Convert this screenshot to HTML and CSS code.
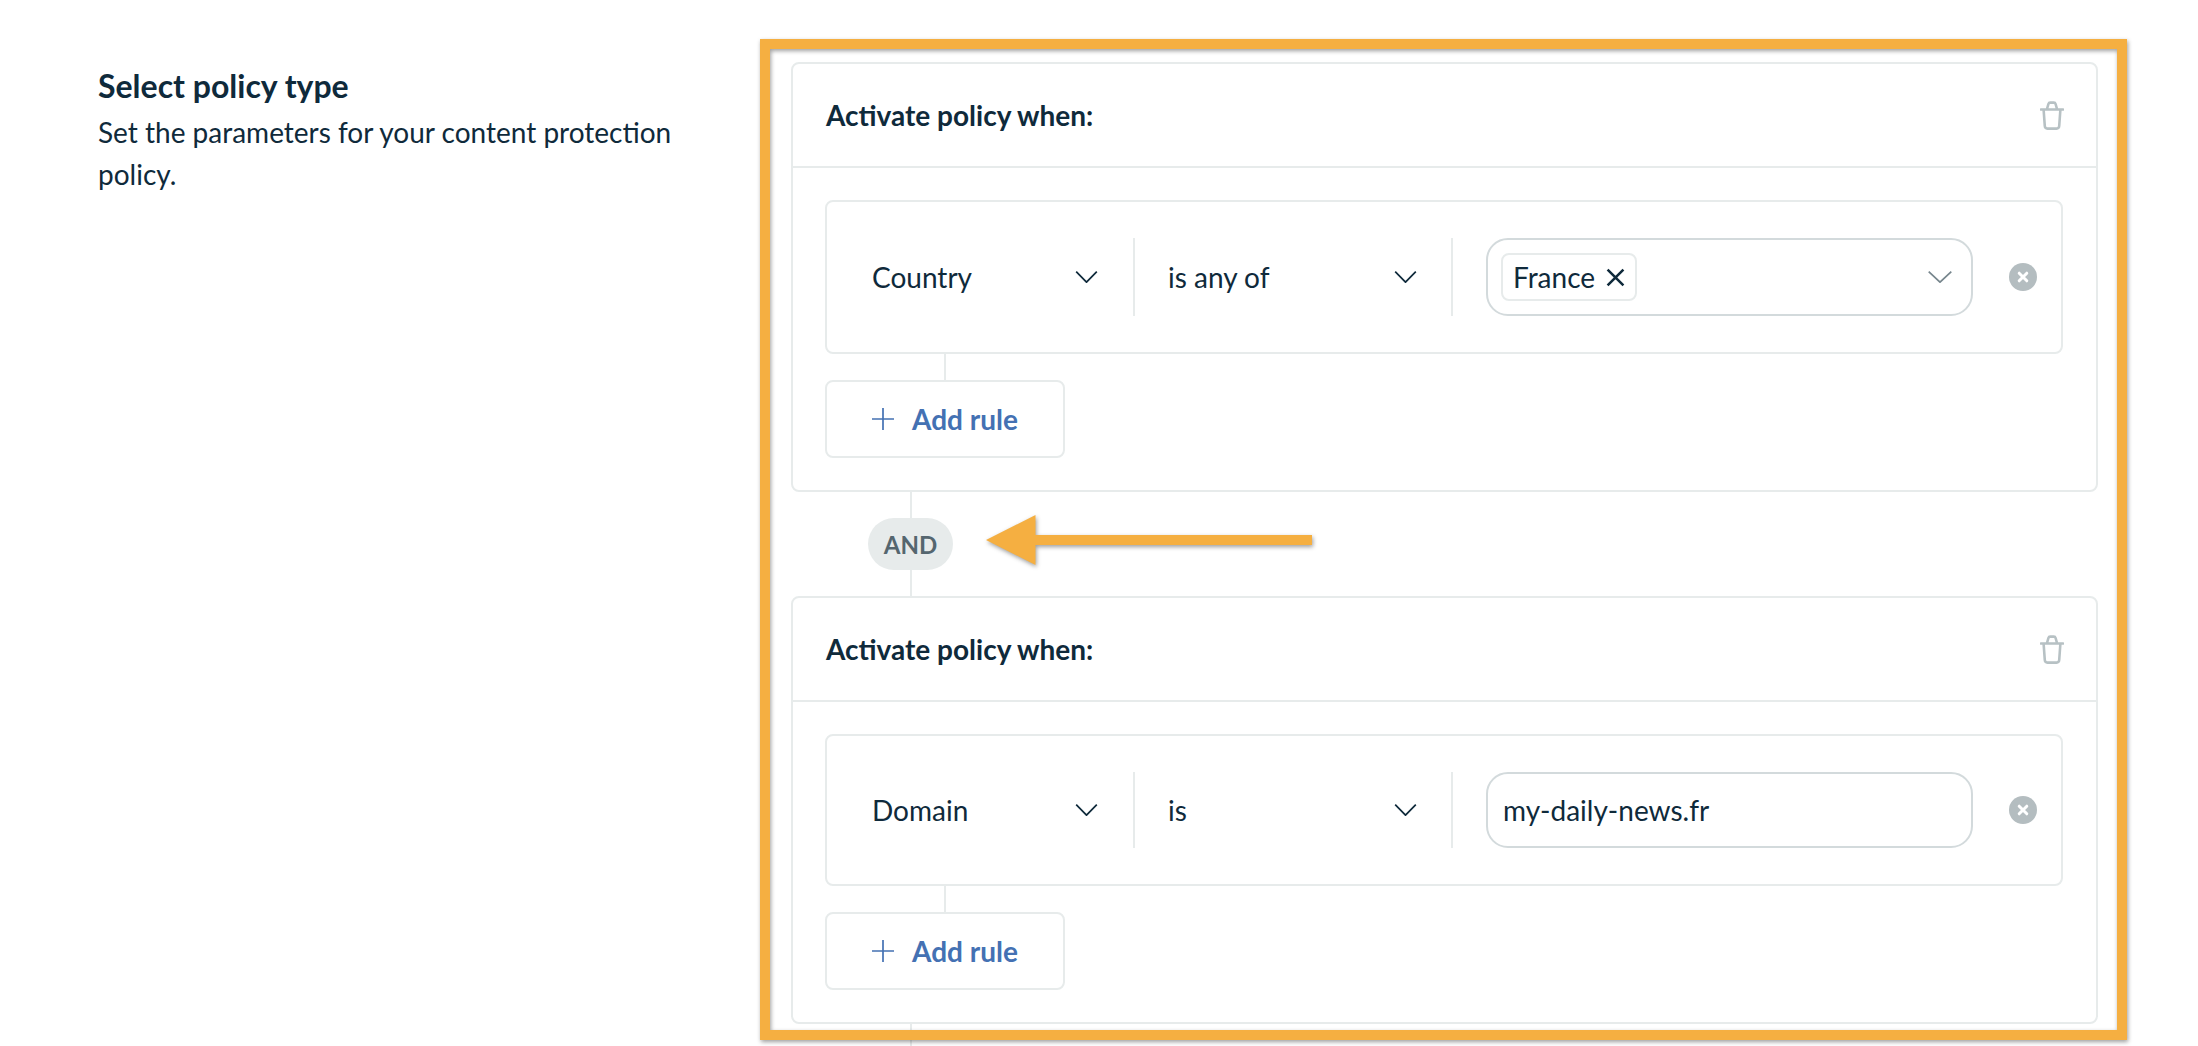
FILE: index.html
```html
<!DOCTYPE html>
<html lang="en">
<head>
<meta charset="utf-8">
<title>Select policy type</title>
<link rel="stylesheet" href="styles.css">
</head>
<body>
<main class="page">
  <section class="intro">
    <h1 class="intro-title">Select policy type</h1>
    <p class="intro-text">Set the parameters for your content protection policy.</p>
  </section>

  <section class="policies">
    <article class="card">
      <header class="card-head">
        <h2 class="card-title">Activate policy when:</h2>
        <svg class="trash" viewBox="0 0 24 29"><path d="M1 8.5H23M7 8 8.4 3Q8.8 1.6 10.2 1.6H13.8Q15.2 1.6 15.6 3L17 8M3.6 8.5 4.8 25Q5 27.6 7.4 27.6H16.6Q19 27.6 19.2 25L20.4 8.5"/></svg>
      </header>
      <div class="card-body">
        <div class="rule">
          <div class="select select-field"><span>Country</span><svg class="chev" viewBox="0 0 22 12"><path d="M.7.7 11 11.2 21.3.7"/></svg></div>
          <div class="select select-op"><span>is any of</span><svg class="chev" viewBox="0 0 22 12"><path d="M.7.7 11 11.2 21.3.7"/></svg></div>
          <div class="value value-tags">
            <span class="tag">France<svg class="tag-x" viewBox="0 0 18 18"><path d="M1.5 1.5 16.5 16.5M16.5 1.5 1.5 16.5"/></svg></span>
            <svg class="chev chev-muted" viewBox="0 0 24 12"><path d="M.7.7 12 11.2 23.3.7"/></svg>
          </div>
          <svg class="remove" viewBox="0 0 28 28"><circle cx="14" cy="14" r="14"/><path d="M10.2 10.2 17.8 17.8M17.8 10.2 10.2 17.8"/></svg>
        </div>
        <div class="stem"></div>
        <button class="add" type="button"><svg class="plus" viewBox="0 0 22 22"><path d="M11 0V22M0 11H22"/></svg>Add rule</button>
      </div>
    </article>

    <div class="link">
      <div class="link-line"></div>
      <div class="and">AND</div>
      <div class="link-line"></div>
    </div>

    <article class="card">
      <header class="card-head">
        <h2 class="card-title">Activate policy when:</h2>
        <svg class="trash" viewBox="0 0 24 29"><path d="M1 8.5H23M7 8 8.4 3Q8.8 1.6 10.2 1.6H13.8Q15.2 1.6 15.6 3L17 8M3.6 8.5 4.8 25Q5 27.6 7.4 27.6H16.6Q19 27.6 19.2 25L20.4 8.5"/></svg>
      </header>
      <div class="card-body">
        <div class="rule">
          <div class="select select-field"><span>Domain</span><svg class="chev" viewBox="0 0 22 12"><path d="M.7.7 11 11.2 21.3.7"/></svg></div>
          <div class="select select-op"><span>is</span><svg class="chev" viewBox="0 0 22 12"><path d="M.7.7 11 11.2 21.3.7"/></svg></div>
          <div class="value value-text">my-daily-news.fr</div>
          <svg class="remove" viewBox="0 0 28 28"><circle cx="14" cy="14" r="14"/><path d="M10.2 10.2 17.8 17.8M17.8 10.2 10.2 17.8"/></svg>
        </div>
        <div class="stem"></div>
        <button class="add" type="button"><svg class="plus" viewBox="0 0 22 22"><path d="M11 0V22M0 11H22"/></svg>Add rule</button>
      </div>
    </article>

    <div class="link-tail"></div>
  </section>

  <div class="highlight" aria-hidden="true"></div>
  <svg class="arrow" viewBox="0 0 326 50" aria-hidden="true"><polygon points="0,25 49.5,0 49.5,20 326,20 326,30 49.5,30 49.5,50"/></svg>
</main>
</body>
</html>
```
FILE: styles.css
```css
* { box-sizing: border-box; }
html, body { margin: 0; background: #fff; }
body { font-family: "Lato", "Liberation Sans", sans-serif; color: #0f2a3b; font-size: 28px; line-height: 42px; }

.page { position: relative; display: flex; height: 1046px; padding: 62px 100px 0 98px; overflow: hidden; }

.intro { flex: 0 0 693px; padding-top: 3px; }
.intro-title { margin: 0 0 4px; font-size: 32px; line-height: 42px; font-weight: 700; }
.intro-text { margin: 0; max-width: 590px; }

.policies { flex: 1; display: flex; flex-direction: column; }

.card { border: 2px solid #e7ebeb; border-radius: 8px; background: #fff; }
.card-head { display: flex; align-items: center; justify-content: space-between; height: 104px; padding: 0 32px 0 33px; border-bottom: 2px solid #e7ebeb; }
.card-title { margin: 0; font-size: 28px; line-height: 42px; font-weight: 700; }
.card-body { padding: 32px 33px 32px 32px; }

.trash { width: 24px; height: 29px; fill: none; stroke: #b7c1c4; stroke-width: 2.6; stroke-linecap: round; stroke-linejoin: round; }

.rule { display: flex; align-items: stretch; padding: 36px 24px 36px 0; border: 2px solid #e7ebeb; border-radius: 8px; }

.select { display: flex; align-items: center; justify-content: space-between; padding-right: 35px; border-right: 2px solid #e7ebeb; }
.select-field { width: 308px; padding-left: 45px; }
.select-op { width: 318px; padding-left: 33px; padding-right: 34px; }

.chev { width: 23px; height: 12px; flex: none; fill: none; stroke: #0f2a3b; stroke-width: 1.7; }
.chev-muted { width: 24px; stroke: #77868d; }

.value { flex: 1; display: flex; align-items: center; margin-left: 33px; border: 2px solid #d3dadc; border-radius: 22px; }
.value-tags { justify-content: space-between; height: 78px; padding: 0 19px 0 13px; }
.value-text { height: 76px; padding: 0 15px; }

.tag { display: flex; align-items: center; height: 48px; padding: 0 10px; border: 2px solid #e7ebeb; border-radius: 8px; }
.tag-x { width: 19px; height: 19px; margin-left: 11px; fill: none; stroke: #0f2a3b; stroke-width: 2.4; }

.remove { align-self: center; flex: none; width: 28px; height: 28px; margin-left: 36px; }
.remove circle { fill: #b4bdc0; }
.remove path { fill: none; stroke: #fff; stroke-width: 3; stroke-linecap: round; }

.stem { width: 2px; height: 26px; margin-left: 119px; background: #e7ebeb; }

.add { display: flex; align-items: center; width: 240px; height: 78px; padding: 0 0 0 45px; border: 2px solid #e7ebeb; border-radius: 8px; background: #fff; color: #4471b3; font: 700 28px/42px "Lato", "Liberation Sans", sans-serif; }
.plus { width: 22px; height: 22px; margin-right: 18px; fill: none; stroke: #4471b3; stroke-width: 1.7; }

.link { display: flex; flex-direction: column; align-items: center; width: 85px; margin-left: 77px; }
.link-line { width: 2px; height: 26px; background: #e7ebeb; }
.and { width: 85px; height: 52px; border-radius: 26px; background: #e7ebeb; color: #55666f; font-size: 24px; font-weight: 700; line-height: 54px; text-align: center; }
.link-tail { flex: 1; width: 2px; margin-left: 119px; background: #e7ebeb; }

.highlight { position: absolute; left: 760px; top: 39px; width: 1367px; height: 1001px; border: 10px solid #f5af41; filter: drop-shadow(1px 2px 2px rgba(40, 40, 40, .45)); }
.arrow { position: absolute; left: 986px; top: 515px; width: 326px; height: 50px; overflow: visible; fill: #f5af41; filter: drop-shadow(1px 2px 2px rgba(40, 40, 40, .45)); }
```
